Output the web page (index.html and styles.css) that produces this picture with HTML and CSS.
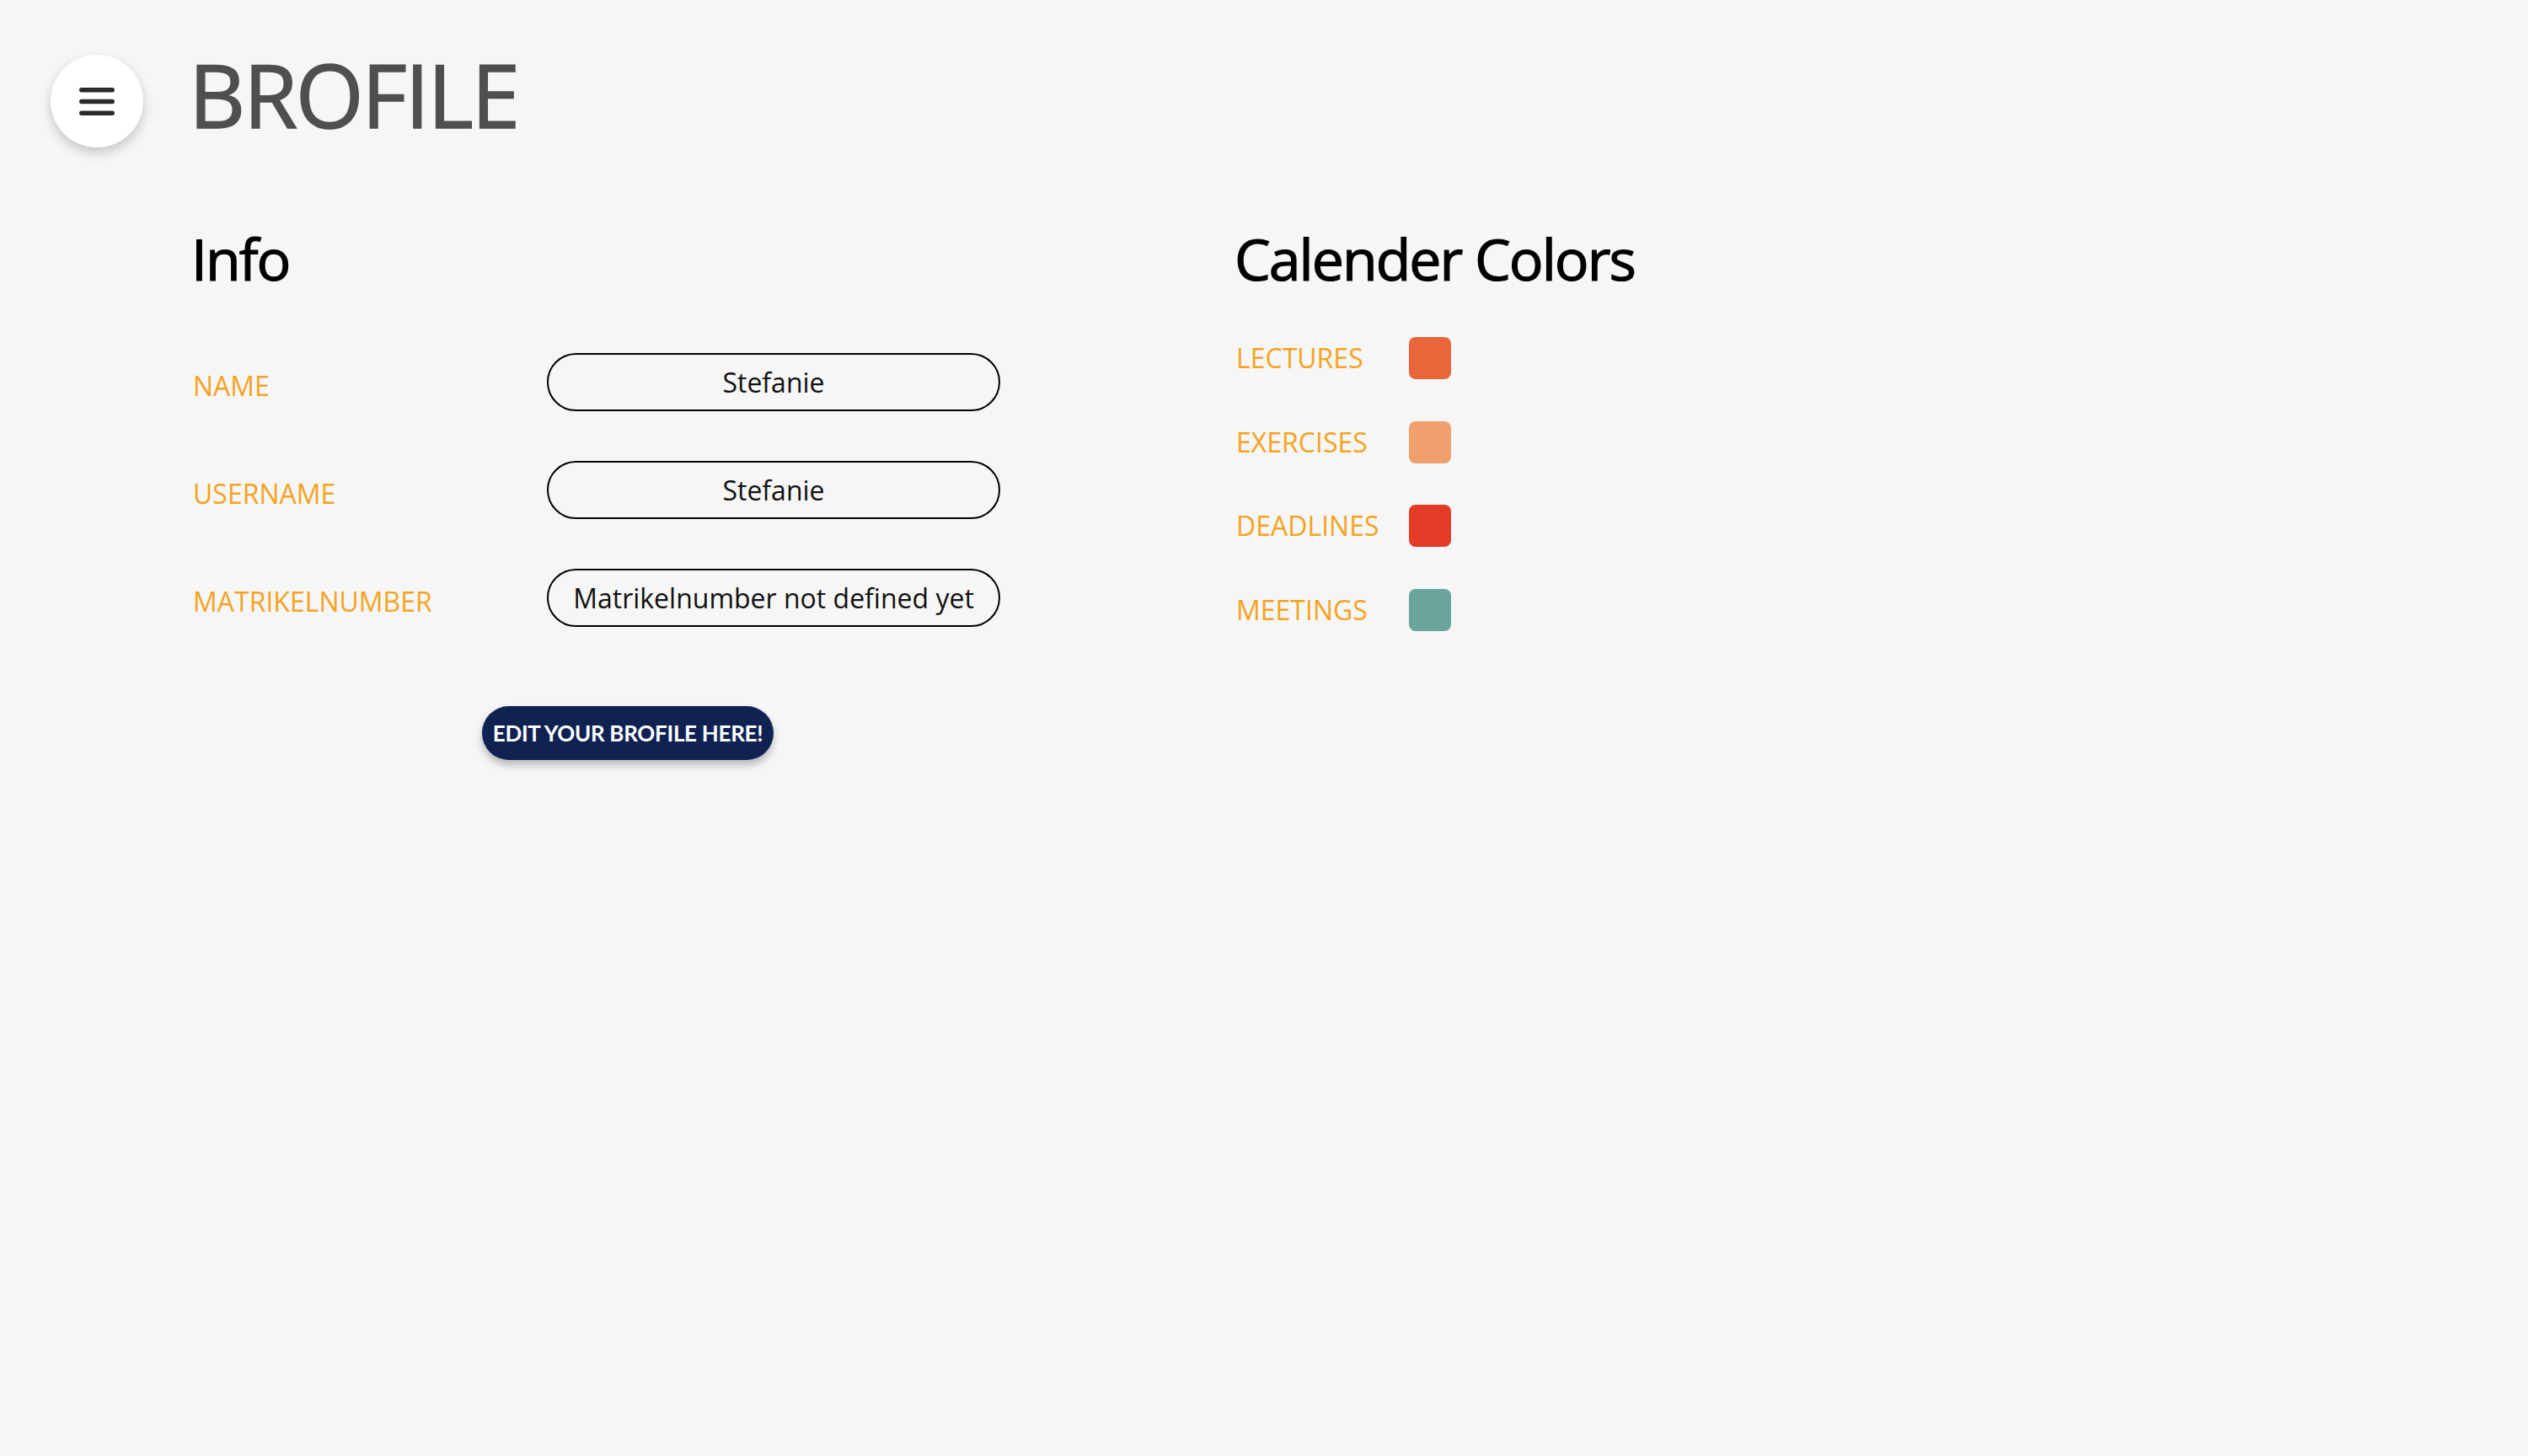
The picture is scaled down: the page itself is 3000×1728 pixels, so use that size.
FILE: index.html
```html
<!DOCTYPE html>
<html lang="en">
<head>
<meta charset="utf-8">
<title>Brofile</title>
<link rel="stylesheet" href="styles.css">
</head>
<body>
<header class="header">
  <button class="menu-btn" aria-label="Menu">
    <svg class="menu-icon" width="42" height="33" viewBox="0 0 42 33">
      <g stroke="#2b2b2b" stroke-width="5.5" stroke-linecap="round">
        <line x1="2.75" y1="2.75" x2="39.25" y2="2.75"/>
        <line x1="2.75" y1="16.5" x2="39.25" y2="16.5"/>
        <line x1="2.75" y1="30.25" x2="39.25" y2="30.25"/>
      </g>
    </svg>
  </button>
  <h1 class="title">BROFILE</h1>
</header>
<main class="main">
  <section class="info">
    <h2 class="heading">Info</h2>
    <div class="info-grid">
      <div class="label">NAME</div>
      <div class="field">Stefanie</div>
      <div class="label">USERNAME</div>
      <div class="field">Stefanie</div>
      <div class="label">MATRIKELNUMBER</div>
      <div class="field">Matrikelnumber not defined yet</div>
    </div>
    <button class="edit-btn">EDIT YOUR BROFILE HERE!</button>
  </section>
  <section class="colors">
    <h2 class="heading">Calender Colors</h2>
    <div class="color-grid">
      <div class="label">LECTURES</div>
      <div class="swatch swatch-lectures"></div>
      <div class="label">EXERCISES</div>
      <div class="swatch swatch-exercises"></div>
      <div class="label">DEADLINES</div>
      <div class="swatch swatch-deadlines"></div>
      <div class="label">MEETINGS</div>
      <div class="swatch swatch-meetings"></div>
    </div>
  </section>
</main>
</body>
</html>
```
FILE: styles.css
```css
* { box-sizing: border-box; }

html, body {
  margin: 0;
  padding: 0;
  background: #f6f6f6;
  font-family: "Open Sans", "Noto Sans", sans-serif;
}

body {
  min-height: 1728px;
}

.header {
  display: flex;
  align-items: flex-start;
  padding: 60px 0 0 60px;
}

.menu-btn {
  width: 110px;
  height: 110px;
  margin-top: 5px;
  border: none;
  border-radius: 50%;
  background: #ffffff;
  box-shadow: 0 6px 14px rgba(0, 0, 0, 0.2);
  display: flex;
  align-items: center;
  justify-content: center;
  padding: 0;
}

.menu-icon { display: block; }

.title {
  margin: 0 0 0 54px;
  font-size: 104px;
  line-height: 1;
  font-weight: 400;
  letter-spacing: -2.3px;
  -webkit-text-stroke: 1.5px #4f4f4f;
  color: #4f4f4f;
}

.main {
  display: flex;
  padding-left: 227px;
}

.info {
  width: 1238px;
}

.heading {
  margin: 98px 0 0 0;
  font-size: 68px;
  line-height: 1;
  font-weight: 400;
  letter-spacing: -2px;
  -webkit-text-stroke: 1.2px #000;
  color: #000;
}

.label {
  font-size: 32px;
  line-height: 1;
  color: #f5a31f;
  padding-left: 2px;
}

.info-grid {
  display: grid;
  grid-template-columns: 422px 538px;
  row-gap: 59px;
  align-items: center;
  margin-top: 78px;
}

.info-grid .label {
  margin-top: 9px;
}

.field {
  height: 69px;
  border: 2.5px solid #000;
  border-radius: 35px;
  display: flex;
  align-items: center;
  justify-content: center;
  font-size: 32px;
  color: #111;
  white-space: nowrap;
}

.edit-btn {
  display: block;
  margin: 94px 0 0 345px;
  width: 346px;
  height: 64px;
  border: none;
  border-radius: 32px;
  background: #102252;
  color: #ffffff;
  font-family: "Lato", "Open Sans", sans-serif;
  font-weight: 700;
  font-size: 26px;
  letter-spacing: -0.3px;
  box-shadow: 0 6px 10px rgba(0, 0, 0, 0.25);
  padding: 0;
}

.color-grid {
  display: grid;
  grid-template-columns: 207px 50px;
  row-gap: 49.5px;
  align-items: center;
  margin-top: 59px;
}

.swatch {
  width: 50px;
  height: 50px;
  border-radius: 8px;
}

.swatch-lectures { background: #e8663a; }
.swatch-exercises { background: #f0a06c; }
.swatch-deadlines { background: #e23c26; }
.swatch-meetings { background: #6aa59c; }
```
